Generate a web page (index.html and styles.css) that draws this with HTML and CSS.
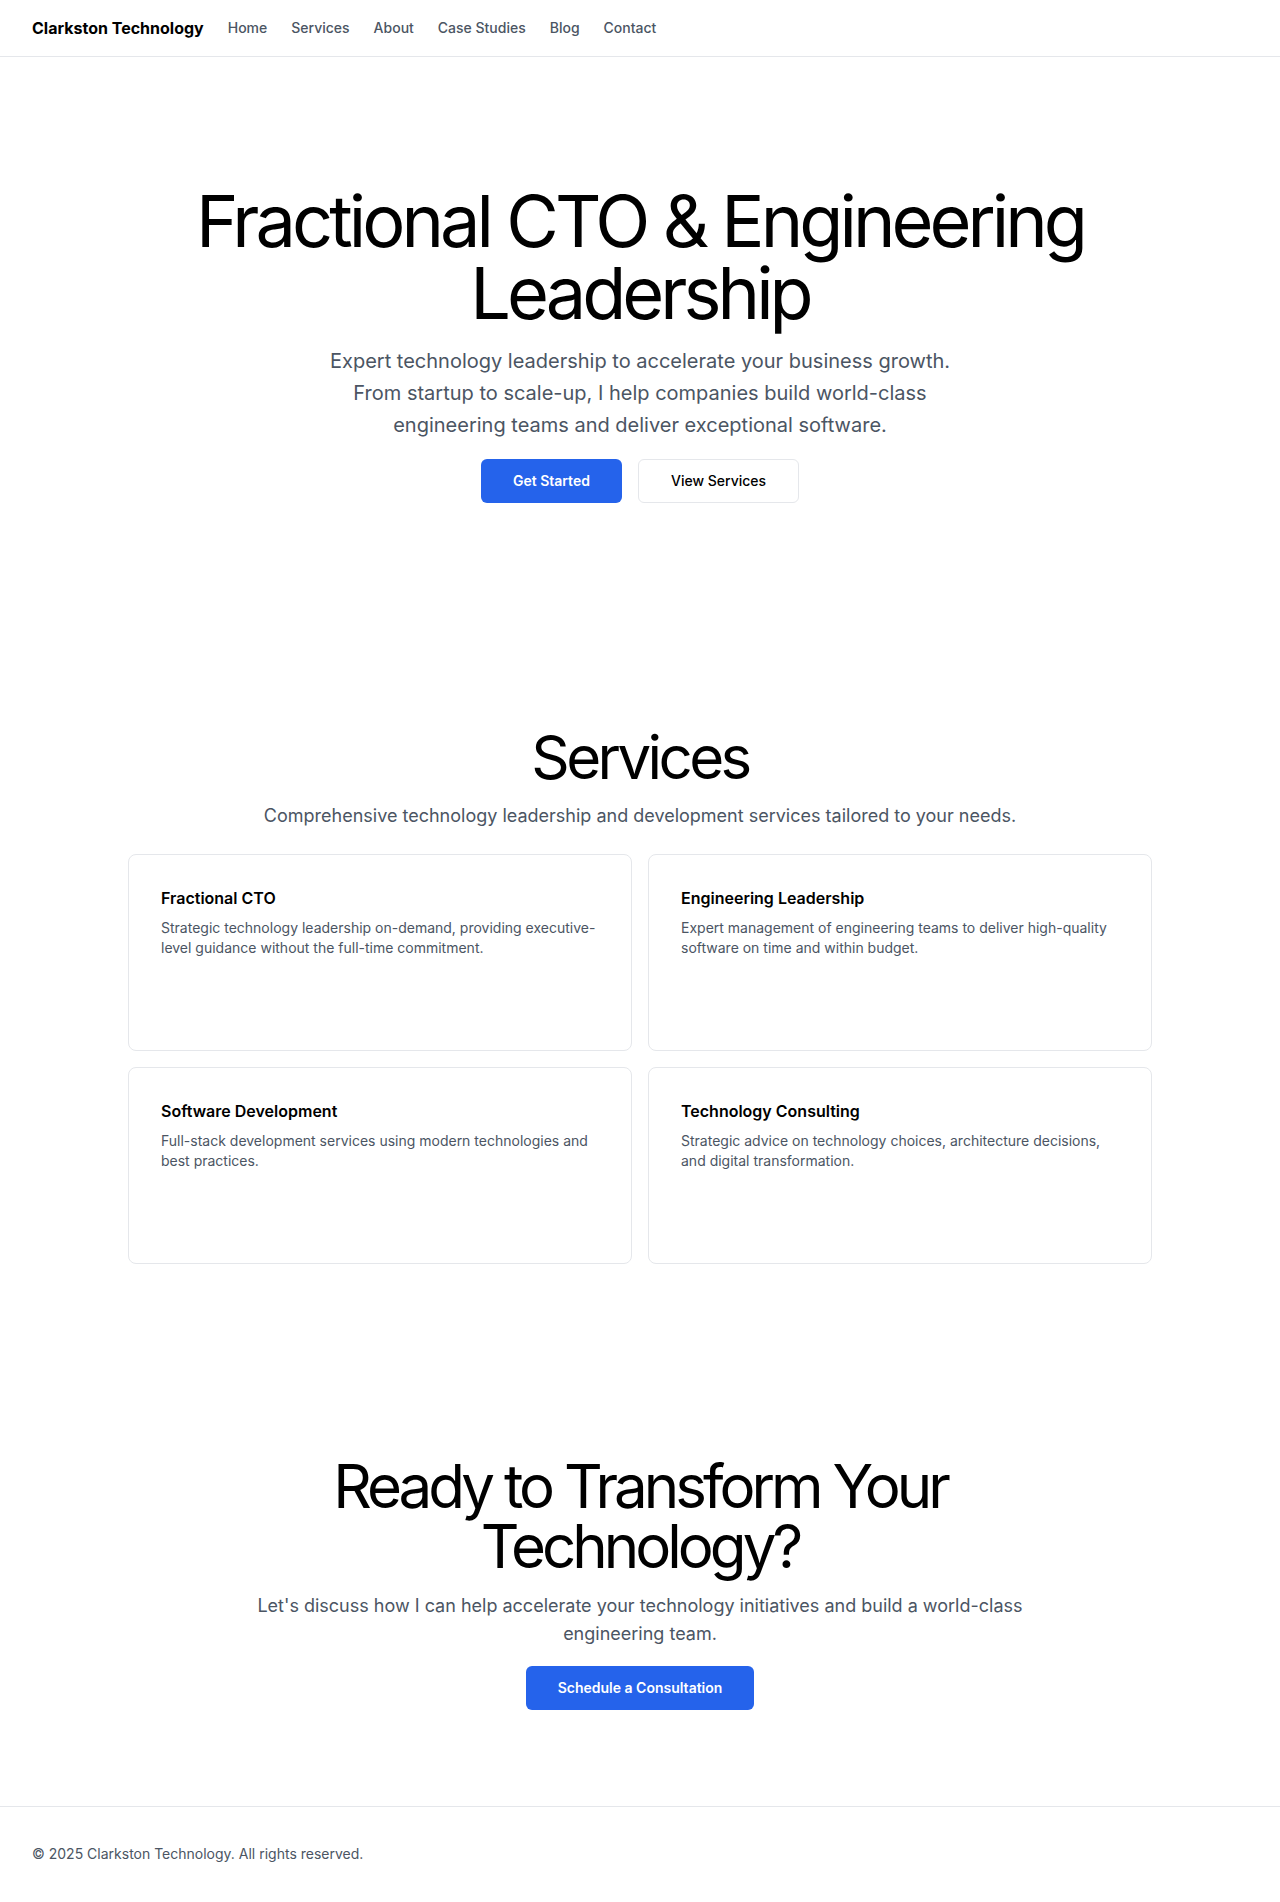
FILE: index.html
```html
<!DOCTYPE html>
<html lang="en">
<head>
<meta charset="utf-8">
<title>Clarkston Technology</title>
<link rel="stylesheet" href="styles.css">
</head>
<body>
<header class="nav">
  <a class="brand" href="#">Clarkston Technology</a>
  <nav class="links">
    <a href="#">Home</a>
    <a href="#">Services</a>
    <a href="#">About</a>
    <a href="#">Case Studies</a>
    <a href="#">Blog</a>
    <a href="#">Contact</a>
  </nav>
</header>
<main>
  <section class="hero">
    <h1 class="hero-title">Fractional CTO &amp; Engineering Leadership</h1>
    <p class="hero-sub">Expert technology leadership to accelerate your business growth. From startup to scale-up, I help companies build world-class engineering teams and deliver exceptional software.</p>
    <div class="actions hero-actions">
      <a class="btn btn-primary" href="#">Get Started</a>
      <a class="btn btn-outline" href="#">View Services</a>
    </div>
  </section>
  <section class="services">
    <h2 class="section-title">Services</h2>
    <p class="section-sub">Comprehensive technology leadership and development services tailored to your needs.</p>
    <div class="grid">
      <div class="card">
        <h3 class="card-title">Fractional CTO</h3>
        <p class="card-text">Strategic technology leadership on-demand, providing executive-level guidance without the full-time commitment.</p>
      </div>
      <div class="card">
        <h3 class="card-title">Engineering Leadership</h3>
        <p class="card-text">Expert management of engineering teams to deliver high-quality software on time and within budget.</p>
      </div>
      <div class="card">
        <h3 class="card-title">Software Development</h3>
        <p class="card-text">Full-stack development services using modern technologies and best practices.</p>
      </div>
      <div class="card">
        <h3 class="card-title">Technology Consulting</h3>
        <p class="card-text">Strategic advice on technology choices, architecture decisions, and digital transformation.</p>
      </div>
    </div>
  </section>
  <section class="cta">
    <h2 class="cta-title">Ready to Transform Your Technology?</h2>
    <p class="cta-sub">Let's discuss how I can help accelerate your technology initiatives and build a world-class engineering team.</p>
    <div class="actions cta-actions">
      <a class="btn btn-primary" href="#">Schedule a Consultation</a>
    </div>
  </section>
</main>
<footer class="footer">
  <p>© 2025 Clarkston Technology. All rights reserved.</p>
</footer>
</body>
</html>
```

FILE: styles.css
```css
* { box-sizing: border-box; }
html, body { margin: 0; padding: 0; }
body {
  font-family: Inter, "Noto Sans", "Liberation Sans", sans-serif;
  color: #000;
  background: #fff;
}
a { text-decoration: none; color: inherit; }
h1, h2, h3, p { margin: 0; }

.nav {
  height: 57px;
  display: flex;
  align-items: center;
  gap: 24px;
  padding: 0 32px;
  border-bottom: 1px solid #e5e7eb;
}
.brand {
  font-size: 16px;
  font-weight: 700;
  line-height: 24px;
}
.links {
  display: flex;
  gap: 24px;
}
.links a {
  font-size: 14px;
  font-weight: 500;
  line-height: 20px;
  color: #4b5563;
}

.hero {
  padding: 128px 24px;
  display: flex;
  flex-direction: column;
  align-items: center;
  text-align: center;
}
.hero-title {
  max-width: 1024px;
  font-size: 72px;
  line-height: 72px;
  font-weight: 400;
  letter-spacing: -0.055em;
}
.hero-sub {
  margin-top: 16px;
  max-width: 640px;
  font-size: 20px;
  line-height: 32px;
  color: #4b5563;
}
.actions {
  display: flex;
  gap: 16px;
  justify-content: center;
}
.hero-actions { margin-top: 18px; }
.cta-actions { margin-top: 18px; }
.btn {
  display: inline-flex;
  align-items: center;
  justify-content: center;
  height: 44px;
  padding: 0 32px;
  border-radius: 6px;
  font-size: 14px;
  font-weight: 600;
  line-height: 20px;
}
.btn-primary {
  background: #2563eb;
  color: #fff;
}
.btn-outline {
  background: #fff;
  color: #000;
  border: 1px solid #e5e7eb;
  font-weight: 500;
}

.services {
  padding: 96px 24px;
  display: flex;
  flex-direction: column;
  align-items: center;
  text-align: center;
}
.section-title {
  font-size: 60px;
  line-height: 60px;
  font-weight: 400;
  letter-spacing: -0.06em;
}
.section-sub {
  margin-top: 15px;
  font-size: 18px;
  line-height: 28px;
  color: #4b5563;
}
.grid {
  margin-top: 24px;
  width: 100%;
  max-width: 1024px;
  display: grid;
  grid-template-columns: 1fr 1fr;
  gap: 16px;
  text-align: left;
}
.card {
  min-height: 197px;
  padding: 31px 32px 32px;
  border: 1px solid #e5e7eb;
  border-radius: 8px;
}
.card-title {
  font-size: 16px;
  line-height: 24px;
  font-weight: 600;
}
.card-text {
  margin-top: 8px;
  font-size: 14px;
  line-height: 20px;
  color: #4b5563;
}

.cta {
  padding: 96px 24px;
  display: flex;
  flex-direction: column;
  align-items: center;
  text-align: center;
}
.cta-title {
  max-width: 768px;
  font-size: 60px;
  line-height: 60px;
  font-weight: 400;
  letter-spacing: -0.066em;
}
.cta-sub {
  margin-top: 16px;
  max-width: 768px;
  font-size: 18px;
  line-height: 28px;
  color: #4b5563;
}

.footer {
  border-top: 1px solid #e5e7eb;
  padding: 37px 32px;
}
.footer p {
  font-size: 14px;
  line-height: 20px;
  color: #4b5563;
}
```
